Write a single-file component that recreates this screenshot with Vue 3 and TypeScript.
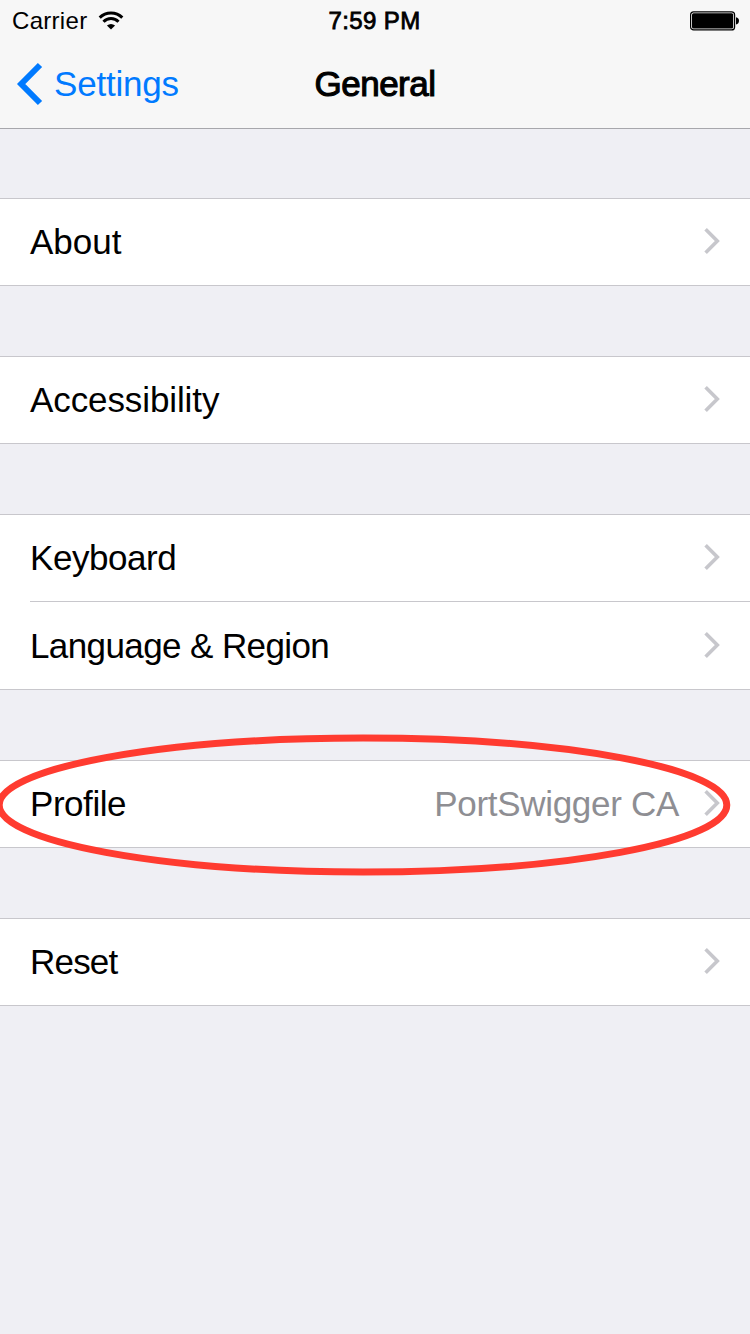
<script setup lang="ts">
interface Row {
  label: string
  key: string
  value?: string
}

const groups: Row[][] = [
  [{ label: 'About', key: 'about' }],
  [{ label: 'Accessibility', key: 'accessibility' }],
  [
    { label: 'Keyboard', key: 'keyboard' },
    { label: 'Language & Region', key: 'language' },
  ],
  [{ label: 'Profile', key: 'profile', value: 'PortSwigger CA' }],
  [{ label: 'Reset', key: 'reset' }],
]
</script>

<template>
  <div class="screen">
    <header class="top">
      <div class="status">
        <div class="carrier">
          <span class="carrier-name">Carrier</span>
          <svg class="wifi" width="26" height="20" viewBox="0 0 26 20">
            <g fill="none" stroke="#000" stroke-width="3">
              <path d="M1.7 6.6A16 16 0 0 1 24.3 6.6" />
              <path d="M5.5 10.7A10.4 10.4 0 0 1 20.5 10.7" />
            </g>
            <path d="M8.9 14.4Q13 11.4 17.1 14.4L13 18.4Z" />
          </svg>
        </div>
        <div class="clock">7:59 PM</div>
        <svg class="battery" width="50" height="20" viewBox="0 0 50 20">
          <rect x="0.6" y="0.9" width="44" height="18" rx="3" fill="none" stroke="#000" stroke-width="1.2" />
          <rect x="2" y="2.3" width="41.2" height="15.2" rx="1.5" />
          <path d="M46 6.2Q49 6.8 49 9.8Q49 12.8 46 13.4Z" />
        </svg>
      </div>
      <nav class="nav">
        <a class="back">
          <svg width="30" height="46" viewBox="0 0 30 46">
            <path d="M26 4L7.2 23L26 42" fill="none" stroke="#007aff" stroke-width="6" />
          </svg>
          <span>Settings</span>
        </a>
        <h1>General</h1>
      </nav>
    </header>

    <main>
      <section v-for="(group, i) in groups" :key="i" class="group">
        <div v-for="row in group" :key="row.key" class="row">
          <span class="label" :class="row.key">{{ row.label }}</span>
          <span v-if="row.value" class="value">{{ row.value }}</span>
          <svg class="chevron" width="18" height="28" viewBox="0 0 18 28">
            <path d="M1.6 2.3L13.3 14L1.6 25.7" fill="none" stroke="#c7c7cc" stroke-width="3.6" />
          </svg>
          <svg v-if="row.key === 'profile'" class="ring" width="740" height="150" viewBox="-4 -75 740 150">
            <ellipse cx="363" cy="0" rx="363.8" ry="67" fill="none" stroke="#ff3b30" stroke-width="7" />
          </svg>
        </div>
      </section>
    </main>
  </div>
</template>

<style>
body {
  margin: 0;
  background: #efeff4;
}
</style>

<style scoped>
.screen {
  width: 750px;
  height: 1334px;
  overflow: hidden;
  background: #efeff4;
  color: #000;
  font-family: "Liberation Sans", Arial, sans-serif;
}
.top {
  box-sizing: border-box;
  height: 129px;
  background: #f7f7f7;
  border-bottom: 1px solid #a7a7ac;
}
.status {
  display: grid;
  grid-template-columns: 1fr auto 1fr;
  align-items: center;
  box-sizing: border-box;
  height: 40px;
  padding: 1px 10px 0 12px;
  font-size: 24px;
}
.carrier {
  display: flex;
  align-items: center;
  gap: 11px;
}
.carrier-name {
  line-height: 39px;
  letter-spacing: 0.3px;
}
.clock {
  margin-right: 3px;
  line-height: 39px;
  letter-spacing: 0.4px;
  -webkit-text-stroke: 0.8px #000;
}
.battery {
  justify-self: end;
}
.nav {
  display: grid;
  grid-template-columns: 1fr auto 1fr;
  height: 87px;
  line-height: 87px;
}
.back {
  display: flex;
  align-items: flex-start;
  gap: 10px;
  padding-left: 14px;
  color: #007aff;
  font-size: 35px;
  letter-spacing: -0.2px;
}
.back svg {
  margin-top: 21px;
}
h1 {
  margin: 0;
  font-size: 35px;
  font-weight: 400;
  letter-spacing: -0.5px;
  -webkit-text-stroke: 1.1px #000;
}
main {
  display: flex;
  flex-direction: column;
  gap: 70px;
  padding-top: 70px;
  margin-top: -1px;
}
.group {
  background: #fff;
  box-shadow: inset 0 1px #c8c7cc, inset 0 -1px #c8c7cc;
}
.row {
  position: relative;
  display: flex;
  align-items: flex-start;
  box-sizing: border-box;
  height: 88px;
  padding: 0 28px 0 30px;
  font-size: 35px;
  line-height: 87px;
}
.row + .row::before {
  content: "";
  position: absolute;
  top: -1px;
  left: 30px;
  right: 0;
  height: 1px;
  background: #c8c7cc;
}
.label {
  flex: 1;
}
.accessibility {
  letter-spacing: -0.1px;
}
.keyboard {
  letter-spacing: -0.45px;
}
.language {
  letter-spacing: -0.6px;
}
.profile {
  letter-spacing: -0.45px;
}
.reset {
  letter-spacing: -0.8px;
}
.value {
  color: #8e8e93;
  margin-right: 25px;
  letter-spacing: -0.3px;
}
.chevron {
  margin-top: 29px;
}
.ring {
  position: absolute;
  left: -4px;
  top: -30px;
}
</style>
